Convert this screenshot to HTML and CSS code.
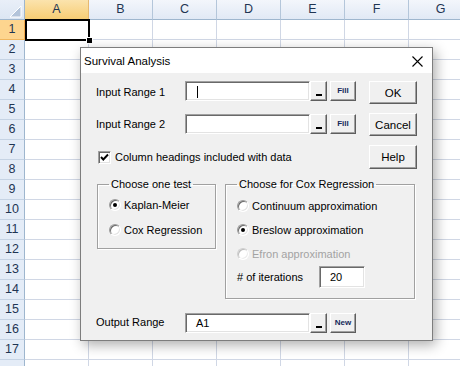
FILE: index.html
```html
<!DOCTYPE html>
<html>
<head>
<meta charset="utf-8">
<link rel="stylesheet" href="styles.css">
</head>
<body>
<div class="page">
  <div class="grid">
    <div class="corner"><svg width="24" height="19" viewBox="0 0 24 19"><polygon points="21,6 21,17 10,17" fill="#b3c4da" stroke="#fff" stroke-width="1"/></svg></div>
    <div class="ch sel">A</div><div class="ch">B</div><div class="ch">C</div><div class="ch">D</div><div class="ch">E</div><div class="ch">F</div><div class="ch">G</div>

    <div class="rh sel">1</div><div class="c"></div><div class="c"></div><div class="c"></div><div class="c"></div><div class="c"></div><div class="c"></div><div class="c"></div>
    <div class="rh">2</div><div class="c"></div><div class="c"></div><div class="c"></div><div class="c"></div><div class="c"></div><div class="c"></div><div class="c"></div>
    <div class="rh">3</div><div class="c"></div><div class="c"></div><div class="c"></div><div class="c"></div><div class="c"></div><div class="c"></div><div class="c"></div>
    <div class="rh">4</div><div class="c"></div><div class="c"></div><div class="c"></div><div class="c"></div><div class="c"></div><div class="c"></div><div class="c"></div>
    <div class="rh">5</div><div class="c"></div><div class="c"></div><div class="c"></div><div class="c"></div><div class="c"></div><div class="c"></div><div class="c"></div>
    <div class="rh">6</div><div class="c"></div><div class="c"></div><div class="c"></div><div class="c"></div><div class="c"></div><div class="c"></div><div class="c"></div>
    <div class="rh">7</div><div class="c"></div><div class="c"></div><div class="c"></div><div class="c"></div><div class="c"></div><div class="c"></div><div class="c"></div>
    <div class="rh">8</div><div class="c"></div><div class="c"></div><div class="c"></div><div class="c"></div><div class="c"></div><div class="c"></div><div class="c"></div>
    <div class="rh">9</div><div class="c"></div><div class="c"></div><div class="c"></div><div class="c"></div><div class="c"></div><div class="c"></div><div class="c"></div>
    <div class="rh">10</div><div class="c"></div><div class="c"></div><div class="c"></div><div class="c"></div><div class="c"></div><div class="c"></div><div class="c"></div>
    <div class="rh">11</div><div class="c"></div><div class="c"></div><div class="c"></div><div class="c"></div><div class="c"></div><div class="c"></div><div class="c"></div>
    <div class="rh">12</div><div class="c"></div><div class="c"></div><div class="c"></div><div class="c"></div><div class="c"></div><div class="c"></div><div class="c"></div>
    <div class="rh">13</div><div class="c"></div><div class="c"></div><div class="c"></div><div class="c"></div><div class="c"></div><div class="c"></div><div class="c"></div>
    <div class="rh">14</div><div class="c"></div><div class="c"></div><div class="c"></div><div class="c"></div><div class="c"></div><div class="c"></div><div class="c"></div>
    <div class="rh">15</div><div class="c"></div><div class="c"></div><div class="c"></div><div class="c"></div><div class="c"></div><div class="c"></div><div class="c"></div>
    <div class="rh">16</div><div class="c"></div><div class="c"></div><div class="c"></div><div class="c"></div><div class="c"></div><div class="c"></div><div class="c"></div>
    <div class="rh">17</div><div class="c"></div><div class="c"></div><div class="c"></div><div class="c"></div><div class="c"></div><div class="c"></div><div class="c"></div>
    <div class="rh"></div><div class="c"></div><div class="c"></div><div class="c"></div><div class="c"></div><div class="c"></div><div class="c"></div><div class="c"></div>
  </div>

  <div class="cursor"><span class="handle"></span></div>

  <div class="dialog">
    <div class="titlebar">
      <span class="title">Survival Analysis</span>
      <svg class="close" width="11" height="11" viewBox="0 0 11 11"><path d="M0.5 0.5 L10.5 10.5 M10.5 0.5 L0.5 10.5" stroke="#000" stroke-width="1.1" fill="none"/></svg>
    </div>
    <div class="body">
      <div class="row r1">
        <span class="label">Input Range 1</span>
        <span class="input"><span class="caret"></span></span>
        <span class="btn pick"><span class="bar"></span></span>
        <span class="btn mini">Fill</span>
        <span class="btn big">OK</span>
      </div>
      <div class="row r2">
        <span class="label">Input Range 2</span>
        <span class="input in2"></span>
        <span class="btn pick in2"><span class="bar"></span></span>
        <span class="btn mini in2">Fill</span>
        <span class="btn big">Cancel</span>
      </div>
      <div class="row r3">
        <span class="check"><svg width="11" height="11" viewBox="0 0 11 11"><path d="M2 5 L4.3 7.5 L9 2.5" stroke="#000" stroke-width="1.9" fill="none"/></svg></span>
        <span class="checktext">Column headings included with data</span>
        <span class="btn big help">Help</span>
      </div>
      <div class="groups">
        <fieldset class="group g1">
          <legend>Choose one test</legend>
          <div class="opt"><span class="radio on"></span><span class="otext">Kaplan-Meier</span></div>
          <div class="opt"><span class="radio"></span><span class="otext">Cox Regression</span></div>
        </fieldset>
        <fieldset class="group g2">
          <legend>Choose for Cox Regression</legend>
          <div class="opt o1"><span class="radio"></span><span class="otext">Continuum approximation</span></div>
          <div class="opt o2"><span class="radio on"></span><span class="otext">Breslow approximation</span></div>
          <div class="opt o3 disabled"><span class="radio"></span><span class="otext">Efron approximation</span></div>
          <div class="iter"><span class="iterlabel"># of iterations</span><span class="input num">20</span></div>
        </fieldset>
      </div>
      <div class="row r4">
        <span class="label">Output Range</span>
        <span class="input val">A1</span>
        <span class="btn pick"><span class="bar"></span></span>
        <span class="btn mini">New</span>
      </div>
    </div>
  </div>
</div>
</body>
</html>
```

FILE: styles.css
```css
html, body {
  margin: 0;
  padding: 0;
  overflow: hidden;
  background: #fff;
}

.page {
  position: relative;
  width: 460px;
  height: 366px;
  overflow: hidden;
  font-family: "Liberation Sans", Arial, sans-serif;
}

/* ---------- spreadsheet ---------- */
.grid {
  display: grid;
  grid-template-columns: 25px repeat(7, 64px);
  grid-auto-rows: 20px;
  width: 473px;
}

.grid > div {
  box-sizing: border-box;
}

.corner {
  background: linear-gradient(#e9eff8, #dce6f3);
  border-right: 1px solid #9eb6ce;
  border-bottom: 1px solid #9eb6ce;
  line-height: 0;
}

.ch {
  background: linear-gradient(#f3f6fb, #e1e9f5);
  border-right: 1px solid #b4c6da;
  border-bottom: 1px solid #9eb6ce;
  color: #1f3553;
  font-size: 12.5px;
  line-height: 19px;
  text-align: center;
}

.ch.sel {
  background: linear-gradient(#fbe3ad, #f7cd74);
  border-bottom-color: #f2a94c;
  border-right-color: #e6b870;
}

.rh {
  background: #e4ecf7;
  border-right: 1px solid #9eb6ce;
  border-bottom: 1px solid #c5d3e4;
  color: #1f3553;
  font-size: 12.5px;
  line-height: 19px;
  text-align: center;
}

.rh.sel {
  background: #fdd58f;
  border-bottom-color: #f0b65e;
  border-right-color: #f2a94c;
}

.c {
  border-right: 1px solid #d0d7e5;
  border-bottom: 1px solid #d0d7e5;
}

.cursor {
  position: absolute;
  left: 25px;
  top: 19px;
  width: 65px;
  height: 22px;
  box-sizing: border-box;
  border: 2px solid #000;
}

.handle {
  position: absolute;
  right: -5px;
  bottom: -5px;
  width: 5px;
  height: 5px;
  background: #000;
  border: 1px solid #fff;
}

/* ---------- dialog ---------- */
.dialog {
  position: absolute;
  left: 80px;
  top: 47px;
  width: 353px;
  box-sizing: border-box;
  border: 1px solid #7d7d7d;
  background: #f0f0f0;
  box-shadow: 3px 4px 12px rgba(0, 0, 0, 0.32);
  font-size: 11px;
  color: #000;
}

.titlebar {
  height: 25px;
  background: #fff;
  display: flex;
  align-items: center;
  justify-content: space-between;
  padding: 0 9px 0 3px;
}

.title {
  font-size: 11.5px;
  margin-top: 1px;
}

.close {
  display: block;
  margin-top: 1px;
}

.body {
  padding: 8px 15px 7px 15px;
}

.row {
  display: flex;
  align-items: flex-start;
}

.r1 { height: 23px; }
.r2 { height: 23px; margin-top: 9px; }
.r3 { height: 24px; margin-top: 9px; align-items: center; }
.r4 { height: 20px; margin-top: 14px; }

.label {
  width: 89px;
  line-height: 23px;
  flex: none;
}

.r4 .label { line-height: 20px; margin-top: -1px; }

.input {
  display: block;
  position: relative;
  box-sizing: border-box;
  width: 125px;
  height: 20px;
  background: #fff;
  border: 1px solid;
  border-color: #a0a0a0 #fff #fff #a0a0a0;
  box-shadow: inset 1px 1px #696969, inset -1px -1px #e3e3e3;
  flex: none;
}

.in2 { margin-top: 1px; }

.caret {
  position: absolute;
  left: 11px;
  top: 4px;
  width: 1px;
  height: 12px;
  background: #000;
}

.val {
  padding-left: 10px;
  line-height: 18px;
  font-size: 11px;
}

.btn {
  display: flex;
  align-items: center;
  justify-content: center;
  box-sizing: border-box;
  background: #f0f0f0;
  border: 1px solid;
  border-color: #fff #5e5e5e #5e5e5e #fff;
  box-shadow: inset -1px -1px #a0a0a0;
  flex: none;
}

.pick {
  width: 17px;
  height: 20px;
  align-items: flex-end;
}

.bar {
  display: block;
  width: 6px;
  height: 2px;
  background: #000;
  margin-bottom: 4px;
}

.mini {
  width: 26px;
  height: 20px;
  margin-left: 3px;
  font-size: 8px;
  font-weight: bold;
  color: #14285a;
  padding-bottom: 1px;
}

.big {
  width: 48px;
  height: 23px;
  margin-left: auto;
  font-size: 11.5px;
}

.help { height: 24px; }

.check {
  display: block;
  box-sizing: border-box;
  width: 13px;
  height: 13px;
  margin-left: 2px;
  background: #fff;
  border: 1px solid;
  border-color: #a0a0a0 #fff #fff #a0a0a0;
  box-shadow: inset 1px 1px #696969, inset -1px -1px #e3e3e3;
  line-height: 0;
  flex: none;
}

.check svg {
  display: block;
}

.checktext {
  margin-left: 4px;
}

/* ---------- groups ---------- */
.groups {
  display: flex;
  align-items: flex-start;
  margin-top: 9px;
  padding-left: 1px;
}

.group {
  margin: 0;
  min-width: 0;
  box-sizing: border-box;
  border: 1px solid #a0a0a0;
  box-shadow: 1px 1px 0 #fff, inset 1px 1px 0 #fff;
}

.group legend {
  padding: 0 2px;
  line-height: 13px;
  font-size: 11px;
}

.g1 {
  width: 119px;
  padding: 1px 0 6px 11px;
}

.g2 {
  width: 190px;
  margin-left: 9px;
  padding: 2px 0 10px 11px;
}

.opt {
  display: flex;
  align-items: center;
  height: 25px;
}

.o2 { height: 24px; }
.o3 { height: 23px; }

.radio {
  position: relative;
  display: block;
  box-sizing: border-box;
  width: 12px;
  height: 12px;
  border-radius: 50%;
  background: #fff;
  border: 1px solid;
  border-color: #9a9a9a #fff #fff #9a9a9a;
  box-shadow: inset 1px 1px #6a6a6a, inset -1px -1px #e3e3e3;
  flex: none;
}

.radio.on::after {
  content: "";
  position: absolute;
  left: 3px;
  top: 3px;
  width: 4px;
  height: 4px;
  border-radius: 50%;
  background: #000;
}

.otext {
  margin-left: 3px;
}

.disabled .otext {
  color: #a3a3a3;
}

.disabled .radio {
  border-color: #cfcfcf #fff #fff #cfcfcf;
  box-shadow: inset 1px 1px #bdbdbd, inset -1px -1px #ececec;
}

.iter {
  display: flex;
  align-items: center;
  margin-top: 1px;
  height: 22px;
}

.iterlabel {
  width: 82px;
  flex: none;
}

.num {
  width: 46px;
  height: 22px;
  padding-left: 10px;
  line-height: 20px;
}
```
